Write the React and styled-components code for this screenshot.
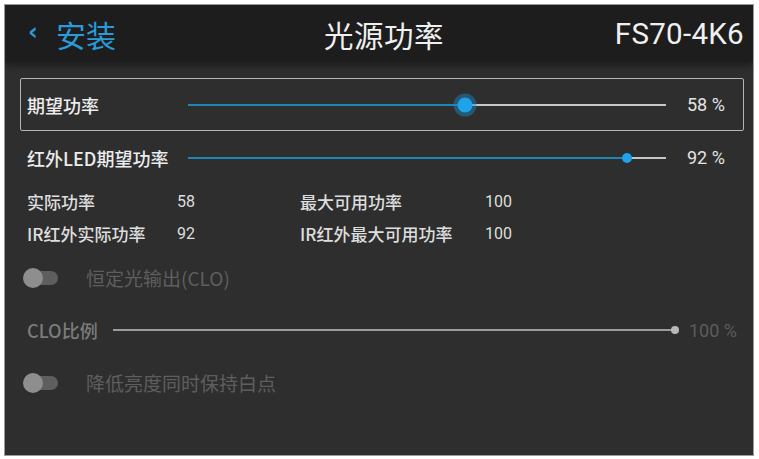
import React from "react";
import styled, { createGlobalStyle } from "styled-components";

const Global = createGlobalStyle`
  html, body { margin: 0; padding: 0; background: #ffffff; }
  body {
    font-family: "Roboto", "Noto Sans CJK SC", sans-serif;
    -webkit-font-smoothing: antialiased;
  }
`;

const Screen = styled.div`
  margin: 5px 6px 4px 5px;
  width: 748px;
  height: 450px;
  background: #2e2e2e;
  display: flex;
  flex-direction: column;
  overflow: hidden;
  box-shadow: 0 0 0 1px #9a9a9a;
`;

const Header = styled.header`
  height: 57px;
  flex: none;
  background: #1d1d1d;
  display: grid;
  grid-template-columns: 1fr auto 1fr;
  align-items: center;
  padding: 0 9px 0 23px;
  box-shadow: 0 4px 6px rgba(0, 0, 0, 0.35);
  position: relative;
  z-index: 1;
`;

const Back = styled.div`
  display: flex;
  align-items: center;
  gap: 18px;
  color: #2a9ad8;
  font-size: 30px;
  font-family: "Noto Sans CJK SC", sans-serif;
`;

const Chevron = styled.span`
  font-family: "DejaVu Sans", sans-serif;
  font-size: 24px;
  font-weight: bold;
  line-height: 1;
  margin-top: -4px;
`;

const Title = styled.div`
  color: #f0f0f0;
  font-size: 29.5px;
  font-family: "Noto Sans CJK SC", sans-serif;
  letter-spacing: 0.5px;
  margin-left: -4px;
`;

const Model = styled.div`
  justify-self: end;
  color: #f0f0f0;
  font-size: 29.5px;
  font-family: "Roboto", sans-serif;
  letter-spacing: 0.3px;
`;

const Body = styled.main`
  flex: 1;
  display: flex;
  flex-direction: column;
  padding: 16px 9px 0 15px;
`;

const SliderRow = styled.div`
  height: 53px;
  box-sizing: border-box;
  display: grid;
  grid-template-columns: 161px 1fr 77px;
  align-items: center;
  padding-left: 6px;
  border: 1px solid ${(p) => (p.$focused ? "#b4b4b4" : "transparent")};
  border-radius: 2px;
`;

const Label = styled.div`
  color: ${(p) => (p.$dim ? "#7c7c7c" : "#ececec")};
  font-size: 18px;
  font-weight: 500;
  font-family: "Noto Sans CJK SC", sans-serif;
  white-space: nowrap;
`;

const Track = styled.div`
  position: relative;
  height: 2px;
  background: ${(p) => p.$color};
`;

const Fill = styled.div`
  height: 100%;
  background: #1b86b8;
`;

const Thumb = styled.div`
  position: absolute;
  top: 50%;
  width: ${(p) => p.$size}px;
  height: ${(p) => p.$size}px;
  border-radius: 50%;
  background: ${(p) => p.$color};
  transform: translate(-50%, -50%);
  box-shadow: ${(p) => (p.$glow ? "0 0 0 4px rgba(27, 140, 200, 0.45)" : "none")};
`;

const Value = styled.div`
  color: ${(p) => (p.$dim ? "#5c5c5c" : "#e4e4e4")};
  font-size: 18px;
  font-family: "Roboto", sans-serif;
  padding-left: ${(p) => p.$pad || 21}px;
  white-space: nowrap;
`;

const Info = styled.div`
  display: grid;
  grid-template-columns: 150px 123px 185px auto;
  grid-auto-rows: 32px;
  align-items: center;
  padding-left: 7px;
  margin-top: 1px;
  color: #dedede;
  font-size: 17px;
  font-family: "Noto Sans CJK SC", sans-serif;
  font-weight: 500;
`;

const Num = styled.span`
  font-family: "Roboto", sans-serif;
  font-weight: 400;
  font-size: 16px;
`;

const ToggleRow = styled.div`
  height: 53px;
  display: flex;
  align-items: center;
  padding-left: 4px;
  gap: 28px;
  margin-top: ${(p) => p.$top || 0}px;
`;

const Switch = styled.div`
  width: 34px;
  height: 14px;
  border-radius: 7px;
  background: #5e5e5e;
  position: relative;
  &::before {
    content: "";
    position: absolute;
    left: -1px;
    top: -3px;
    width: 20px;
    height: 20px;
    border-radius: 50%;
    background: #8e8e8e;
  }
`;

const DimText = styled.span`
  color: #5e5e5e;
  font-size: 19px;
  font-family: "Noto Sans CJK SC", sans-serif;
`;

const ClRow = styled.div`
  height: 52px;
  display: grid;
  grid-template-columns: 86px 1fr 69px;
  align-items: center;
  padding-left: 7px;
`;

function Slider({ value, thumb, glow, thumbColor, rest = "#c6c6c6", fill = true }) {
  return (
    <Track $color={rest}>
      {fill && <Fill style={{ width: `${value}%` }} />}
      <Thumb
        style={{ left: `${value}%` }}
        $size={thumb}
        $glow={glow}
        $color={thumbColor}
      />
    </Track>
  );
}

export default function App() {
  return (
    <>
      <Global />
      <Screen>
        <Header>
          <Back>
            <Chevron>‹</Chevron>
            <span>安装</span>
          </Back>
          <Title>光源功率</Title>
          <Model>FS70-4K6</Model>
        </Header>
        <Body>
          <SliderRow $focused>
            <Label>期望功率</Label>
            <Slider value={58} thumb={15} glow thumbColor="#1ea2ea" />
            <Value>58 %</Value>
          </SliderRow>
          <SliderRow>
            <Label>红外LED期望功率</Label>
            <Slider value={91.8} thumb={10} thumbColor="#1ea2ea" />
            <Value>92 %</Value>
          </SliderRow>
          <Info>
            <span>实际功率</span>
            <Num>58</Num>
            <span>最大可用功率</span>
            <Num>100</Num>
            <span>IR红外实际功率</span>
            <Num>92</Num>
            <span>IR红外最大可用功率</span>
            <Num>100</Num>
          </Info>
          <ToggleRow $top={2}>
            <Switch />
            <DimText>恒定光输出(CLO)</DimText>
          </ToggleRow>
          <ClRow>
            <Label $dim>CLO比例</Label>
            <Slider value={100} thumb={8} thumbColor="#b8b8b8" rest="#9c9c9c" fill={false} />
            <Value $dim $pad={14}>100 %</Value>
          </ClRow>
          <ToggleRow>
            <Switch />
            <DimText>降低亮度同时保持白点</DimText>
          </ToggleRow>
        </Body>
      </Screen>
    </>
  );
}
